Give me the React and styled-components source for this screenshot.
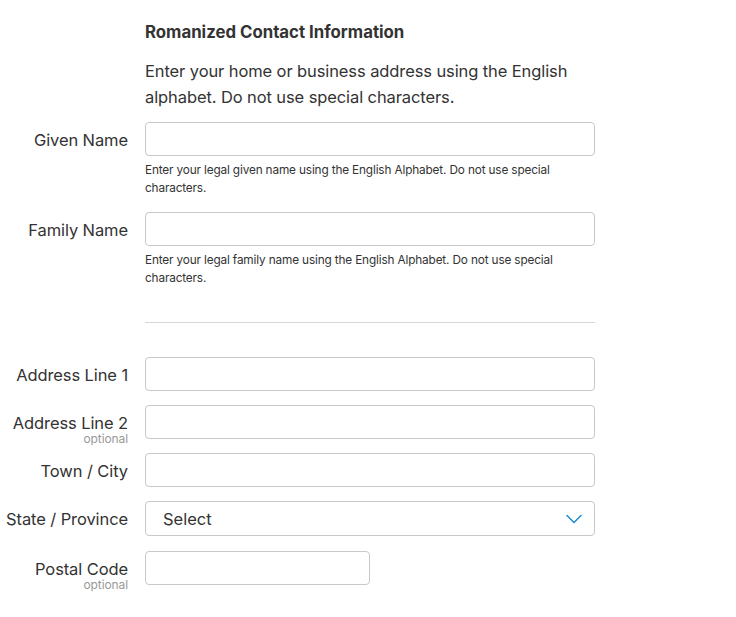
import React from 'react'
import styled, { createGlobalStyle } from 'styled-components'

const GlobalStyle = createGlobalStyle`
    body {
        margin: 0;
        background: #fff;
        font-family: Inter, "Noto Sans", sans-serif;
        color: #333;
    }
`

const Page = styled.div`
    width: 736px;
    padding: 20px 0 32px;
`

const Form = styled.div`
    display: grid;
    grid-template-columns: 128px 450px;
    column-gap: 17px;
    align-items: start;
`

const Heading = styled.h2`
    grid-column: 2;
    margin: 0;
    font-size: 16.8px;
    font-weight: 700;
    line-height: 24px;
    color: #333;
`

const Intro = styled.p`
    grid-column: 2;
    margin: 14px 0 12px;
    font-size: 16.5px;
    line-height: 26px;
    letter-spacing: -0.1px;
`

const Label = styled.label`
    grid-column: 1;
    display: flex;
    flex-direction: column;
    align-items: flex-end;
    text-align: right;
    font-size: 16.5px;
    line-height: 18px;
    padding-top: 9px;
    margin-top: ${props => props.gap || 0}px;
    white-space: nowrap;
    letter-spacing: -0.1px;
    height: 34px;
    box-sizing: border-box;
`

const Optional = styled.span`
    font-size: 12px;
    line-height: 12px;
    color: #999;
    margin-top: 1px;
`

const Field = styled.div`
    grid-column: 2;
    margin-top: ${props => props.gap || 0}px;
`

const TextInput = styled.input`
    display: block;
    box-sizing: border-box;
    width: ${props => props.narrow ? '225px' : '100%'};
    height: 34px;
    border: 1px solid #c8c8c8;
    border-radius: 4px;
    background: #fff;
    padding: 0 16px;
    font: inherit;
    font-size: 16.5px;
    outline: none;
`

const Hint = styled.div`
    margin-top: 5px;
    font-size: 11.8px;
    line-height: 18px;
    color: #333;
    letter-spacing: -0.15px;
    padding-right: 40px;
`

const Divider = styled.hr`
    grid-column: 2;
    border: 0;
    border-top: 1px solid #d6d6d6;
    margin: 35px 0 34px;
`

const SelectBox = styled.div`
    box-sizing: border-box;
    height: 35px;
    border: 1px solid #c8c8c8;
    border-radius: 4px;
    display: flex;
    align-items: center;
    justify-content: space-between;
    padding: 0 12px 0 17px;
    font-size: 16.5px;
    color: #333;
`

const Chevron = () => (
    <svg width="16" height="10" viewBox="0 0 16 10" fill="none">
        <path d="M1 1.5 L8 8.5 L15 1.5" stroke="#1f8bd0" strokeWidth="1.5" strokeLinecap="round" strokeLinejoin="round" />
    </svg>
)

const App = () => (
    <Page>
        <GlobalStyle />
        <Form>
            <Heading>Romanized Contact Information</Heading>
            <Intro>Enter your home or business address using the English alphabet. Do not use special characters.</Intro>

            <Label>Given Name</Label>
            <Field>
                <TextInput />
                <Hint>Enter your legal given name using the English Alphabet. Do not use special characters.</Hint>
            </Field>

            <Label gap={15}>Family Name</Label>
            <Field gap={15}>
                <TextInput />
                <Hint>Enter your legal family name using the English Alphabet. Do not use special characters.</Hint>
            </Field>

            <Divider />

            <Label>Address Line 1</Label>
            <Field><TextInput /></Field>

            <Label gap={14}>Address Line 2<Optional>optional</Optional></Label>
            <Field gap={14}><TextInput /></Field>

            <Label gap={14}>Town / City</Label>
            <Field gap={14}><TextInput /></Field>

            <Label gap={14}>State / Province</Label>
            <Field gap={14}>
                <SelectBox>
                    <span>Select</span>
                    <Chevron />
                </SelectBox>
            </Field>

            <Label gap={15}>Postal Code<Optional>optional</Optional></Label>
            <Field gap={15}><TextInput narrow /></Field>
        </Form>
    </Page>
)

export default App
